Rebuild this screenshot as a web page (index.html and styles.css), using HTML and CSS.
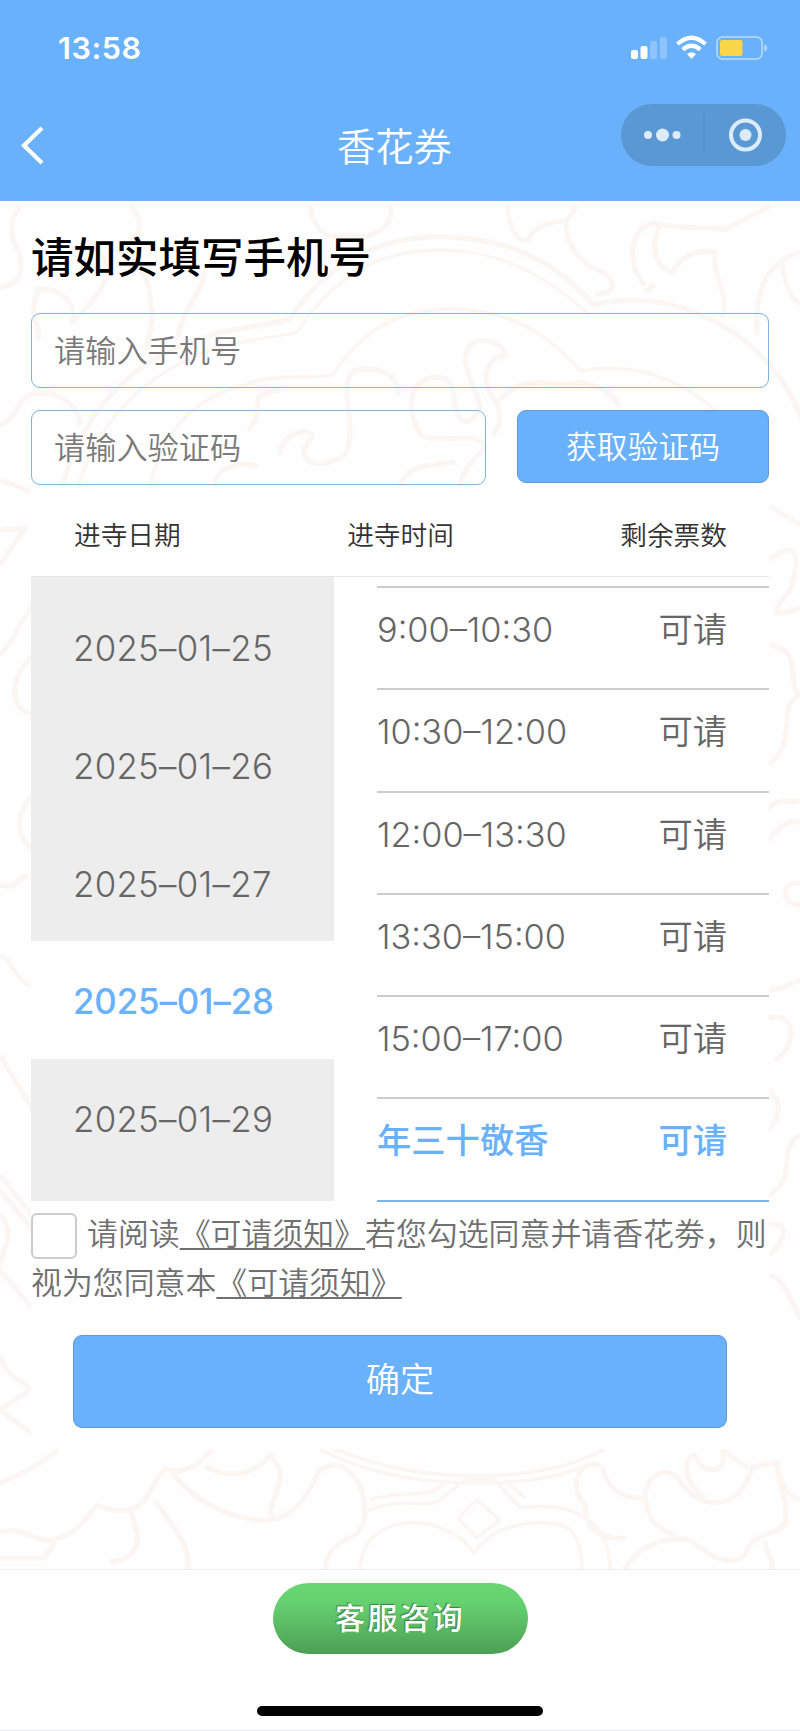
FILE: index.html
```html
<!DOCTYPE html>
<html lang="zh-CN">
<head>
    <meta charset="UTF-8">
    <meta name="viewport" content="width=device-width, initial-scale=1.0">
    <title>香花券</title>
    <link rel="stylesheet" href="styles.css">
</head>
<body>
    <header>
        <div class="status-bar">
            <span class="clock">13:58</span>
            <svg class="status-icons" width="138" height="26" viewBox="0 0 138 26">
                <g fill="#fff">
                    <rect x="1" y="15" width="7" height="9" rx="2"/>
                    <rect x="10.5" y="11" width="7" height="13" rx="2"/>
                    <rect x="20" y="6" width="7" height="18" rx="2" opacity=".25"/>
                    <rect x="30" y="2" width="7" height="22" rx="2" opacity=".25"/>
                </g>
                <g fill="none" stroke="#fff" stroke-width="4.2">
                    <path d="M47.5 9 Q61.500 -3.500 75.500 9"/>
                    <path d="M52.700 14.600 Q61.500 7 70.300 14.600"/>
                </g>
                <path d="M57 19 Q61.500 15.300 66 19 L61.500 24 Z" fill="#fff"/>
                <rect x="87" y="2" width="45" height="22" rx="5.500" fill="none" stroke="#a9d3fb" stroke-width="2"/>
                <rect x="90" y="5" width="22.500" height="16" rx="2" fill="#f9d549"/>
                <path d="M134 9.500 Q137.500 10 137.500 13 Q137.500 16 134 16.500 Z" fill="#a9d3fb"/>
            </svg>
        </div>
        <div class="nav-bar">
            <svg class="back" width="24" height="40" viewBox="0 0 24 40">
                <path d="M22 3 L4 20.500 L22 38" fill="none" stroke="#fff" stroke-width="4.200"/>
            </svg>
            <h1>香花券</h1>
            <div class="capsule">
                <svg width="165" height="62" viewBox="0 0 165 62">
                    <g fill="#dcecfb">
                        <circle cx="27" cy="31" r="4"/>
                        <circle cx="41.500" cy="31" r="6.500"/>
                        <circle cx="55.500" cy="31" r="4"/>
                        <circle cx="124.500" cy="31" r="6"/>
                    </g>
                    <path d="M83 10 V52" stroke="#5090cc" stroke-width="1"/>
                    <circle cx="124.500" cy="31" r="14.500" fill="none" stroke="#dcecfb" stroke-width="4"/>
                </svg>
            </div>
        </div>
    </header>

    <main>
        <!-- cloud pattern -->
        <svg class="pattern" width="800" height="1368" viewBox="0 201 800 1368">
            <g fill="none" stroke="#fbf6f2" stroke-width="5" stroke-linejoin="round">
                <!-- medallion, top half -->
                <path d="M62 487 C80 420 125 360 205 337 C235 327 265 327 290 319 C325 265 375 237 440 237 C510 237 555 262 594 305 C665 288 730 320 770 365 C785 382 795 400 804 425"/>
                <path d="M78 487 C95 430 135 378 208 351 C240 339 270 339 297 332 C335 275 380 250 440 250 C500 250 545 275 590 315" stroke-width="3"/>
                <path d="M150 487 C160 440 185 400 245 385 C275 372 305 380 333 375 C365 325 405 309 450 309 C510 309 550 335 580 371 C640 360 690 385 720 415" stroke-width="3.500"/>
                <!-- clouds above it -->
                <path d="M0 287 C20 285 25 270 18 250 C10 235 8 222 20 206 M35 290 C55 285 78 300 72 322 C95 300 120 275 98 250 C85 235 70 250 62 265 M130 206 C150 225 135 245 115 250 C130 262 150 270 150 300 C155 320 150 332 146 350 M205 270 C200 300 180 310 178 340 M40 290 C25 310 42 325 38 340"/>
                <path d="M310 206 C315 232 325 240 350 235 C375 240 395 225 390 206 M508 206 C508 232 520 242 528 240 C535 225 555 220 566 222 C566 245 580 265 605 273 C622 290 605 294 595 294 M566 222 L577 206"/>
                <path d="M645 285 C625 265 630 225 655 223 C690 232 715 225 725 230 C750 215 765 210 770 206 M660 225 C650 245 655 268 672 272 C685 250 705 250 715 252 C712 280 730 290 722 318 M757 335 C755 300 760 265 800 252 M782 262 C785 290 792 300 800 304 M655 285 L645 292"/>
                <!-- swirls behind the inputs -->
                <path d="M420 435 C405 405 410 380 435 377 C460 377 450 400 458 415 C462 425 475 425 480 405 C470 375 455 355 475 342 C490 338 503 345 506 355 C490 358 482 370 488 390 C500 405 505 420 493 435 M420 435 C440 445 475 430 485 445 C480 460 465 460 460 487 M500 400 C520 375 545 385 570 384 C590 380 610 390 620 407 M248 430 C270 410 240 395 280 390 M280 455 C280 430 320 425 310 440 C290 465 325 470 345 455 C360 425 335 385 355 370 C380 365 400 375 398 395 M400 487 C405 465 430 465 455 462 M215 487 C215 465 245 460 258 467"/>
                <path d="M0 425 C20 420 15 390 45 393 C65 395 80 410 80 425 M0 480 L32 492"/>
                <!-- side edges -->
                <path d="M0 530 L25 528 L0 565 M0 655 C15 640 20 620 34 605 M34 713 C12 715 5 680 34 655 M34 850 C15 840 15 810 34 795 M0 885 C12 890 18 880 28 875 M0 955 C15 960 15 985 34 985 M0 1055 L34 1112 M0 1175 L34 1218 M0 1190 L34 1232 M0 1215 C20 1235 -5 1260 0 1270 L34 1310 M0 1355 C10 1385 20 1375 30 1390 L0 1410 L34 1435"/>
                <path d="M768 505 L800 525 M768 560 C800 535 800 560 790 590 C775 610 765 620 800 608 M770 645 C805 650 785 685 800 695 C775 705 800 740 768 765 M768 808 C785 795 790 805 800 800 M768 840 C780 825 790 820 800 822 M800 883 C780 880 780 905 800 905 M768 990 C785 990 785 985 800 980 M768 1018 C800 1010 795 1050 775 1060 M768 1090 C790 1105 770 1130 768 1130 M768 1195 C800 1180 775 1150 800 1135 M768 1225 C795 1220 780 1245 770 1255 M768 1275 C785 1275 800 1320 800 1320"/>
                <!-- bottom band -->
                <path d="M0 1483 C20 1475 40 1465 58 1449 M0 1532 C20 1525 30 1540 52 1540 C75 1535 85 1520 97 1505 C120 1515 130 1510 140 1505 C150 1495 155 1480 165 1469 C185 1475 200 1465 212 1449 M130 1509 C140 1535 145 1558 110 1562 M155 1500 C170 1525 190 1540 188 1569 M172 1472 C195 1505 245 1525 275 1519 C305 1510 310 1485 320 1470 C345 1455 365 1480 365 1515 C360 1550 330 1530 325 1569 M205 1466 C230 1480 255 1475 270 1455 C295 1480 265 1500 272 1518 M0 1558 L45 1558 L55 1542"/>
                <path d="M335 1449 C420 1485 540 1485 605 1449 M320 1449 C400 1495 550 1490 590 1462 M365 1512 C400 1495 425 1510 440 1500 L465 1480 L495 1480 L520 1508 C580 1500 610 1525 610 1569 M370 1500 C395 1490 420 1498 435 1490 L450 1480 M505 1480 L525 1498 M360 1569 C365 1505 450 1515 474 1553 C500 1515 560 1520 570 1530 C580 1540 582 1555 582 1569 M477 1500 L500 1520 L477 1538 L458 1518 Z" stroke-width="3.500"/>
                <path d="M600 1465 C575 1460 570 1490 585 1505 C585 1530 600 1540 625 1538 M602 1465 C605 1485 620 1500 645 1498 C645 1475 665 1465 678 1478 C695 1510 740 1515 752 1467 L778 1462 C775 1485 790 1495 785 1525 C765 1540 755 1530 745 1555 C725 1570 705 1550 690 1540 C660 1535 635 1550 625 1569 M645 1498 C650 1525 660 1530 675 1535 M705 1498 C680 1480 685 1455 695 1455 C705 1480 730 1470 722 1449 L748 1468 M765 1540 C765 1555 775 1560 772 1569 M778 1470 C785 1495 790 1495 800 1500"/>
            </g>
        </svg>

        <form>
            <h2>请如实填写手机号</h2>
            <input type="text" placeholder="请输入手机号">
            <div class="code-row">
                <input type="text" placeholder="请输入验证码">
                <button type="button" class="code-button">获取验证码</button>
            </div>
            <section>
                <div class="table-head">
                    <span>进寺日期</span>
                    <span>进寺时间</span>
                    <span>剩余票数</span>
                </div>
                <div class="table-body">
                    <ul class="dates">
                        <li>2025–01–25</li>
                        <li>2025–01–26</li>
                        <li>2025–01–27</li>
                        <li class="selected">2025–01–28</li>
                        <li>2025–01–29</li>
                    </ul>
                    <ul class="times">
                        <li><span>9:00–10:30</span><b>可请</b></li>
                        <li><span>10:30–12:00</span><b>可请</b></li>
                        <li><span>12:00–13:30</span><b>可请</b></li>
                        <li><span>13:30–15:00</span><b>可请</b></li>
                        <li><span>15:00–17:00</span><b>可请</b></li>
                        <li class="selected"><span>年三十敬香</span><b>可请</b></li>
                    </ul>
                </div>
                <p class="agree"><input type="checkbox">请阅读<u>《可请须知》</u>若您勾选同意并请香花劵，则<br>视为您同意本<u>《可请须知》</u></p>
                <button type="button" class="ok-button">确定</button>
            </section>
        </form>
    </main>

    <footer>
        <button type="button" class="service-button">客服咨询</button>
        <div class="home-bar"></div>
    </footer>
</body>
</html>
```
FILE: styles.css
```css
* {
    box-sizing: border-box;
}
body {
    margin: 0;
    width: 800px;
    height: 1731px;
    overflow: hidden;
    background-color: #fefefe;
    color: #666;
    font-family: Inter, "Noto Sans CJK SC", sans-serif;
}
h1, h2, p, ul {
    margin: 0;
    padding: 0;
}
li {
    list-style: none;
}
button, input {
    font-family: inherit;
    margin: 0;
}
header {
    height: 201px;
    background-color: #69b1fa;
    color: #fff;
}
.status-bar {
    display: flex;
    justify-content: space-between;
    align-items: center;
    height: 96px;
    padding: 0 32px 0 58px;
}
.clock {
    font-size: 30.5px;
    font-weight: 600;
    line-height: 36px;
    letter-spacing: 0.6px;
}
.nav-bar {
    display: flex;
    align-items: flex-start;
    padding-top: 8px;
}
.back {
    margin: 21px 0 0 20px;
}
h1 {
    width: 116px;
    margin-left: 293px;
    padding-top: 16px;
    font-size: 38.3px;
    line-height: 54px;
    font-weight: 350;
    white-space: nowrap;
}
.capsule {
    margin-left: 168px;
    width: 165px;
    height: 62px;
    border-radius: 31px;
    background-color: #5a98d4;
}
main {
    position: relative;
    height: 1368px;
    overflow: hidden;
}
.pattern {
    position: absolute;
    top: 0;
    left: 0;
}
form {
    position: relative;
    padding: 0 31px;
}
h2 {
    height: 112px;
    padding-top: 27px;
    color: #000;
    font-size: 42.5px;
    line-height: 60px;
    font-weight: 500;
}
input[type="text"] {
    display: block;
    width: 738px;
    height: 75px;
    padding: 0 22px;
    border: 1px solid #7db5e2;
    border-radius: 9px;
    background: transparent;
    font-size: 31.2px;
    font-weight: 350;
    outline: none;
}
input::placeholder {
    color: #7a7a7a;
}
.code-row {
    display: flex;
    justify-content: space-between;
    margin-top: 22px;
}
.code-row input[type="text"] {
    width: 455px;
}
.code-button, .ok-button {
    border: 1px solid #5d9bdc;
    border-radius: 9px;
    background-color: #69b1fa;
    color: #fff;
    padding: 0 0 5px;
    font-weight: 350;
}
.code-button {
    width: 252px;
    height: 73px;
    font-size: 30.8px;
}
section {
    height: 962px;
    margin-top: 2px;
    background-color: #fefefe;
}
.table-head {
    display: flex;
    justify-content: space-between;
    height: 90px;
    padding: 28px 42px 0 43px;
    border-bottom: 1px solid #e6e6e6;
    color: #333;
    font-size: 26.7px;
    line-height: 40px;
    font-weight: 350;
}
.table-body {
    display: flex;
    justify-content: space-between;
    height: 624px;
}
.dates {
    width: 303px;
    padding-top: 11px;
    background-color: #ededed;
}
.dates li {
    height: 117.8px;
    padding-left: 42px;
    font-size: 34.8px;
    line-height: 120px;
    letter-spacing: 0.3px;
    font-weight: 350;
}
.dates .selected {
    background-color: #fefefe;
    color: #69b1fa;
    font-weight: 500;
    letter-spacing: -0.1px;
}
.times {
    width: 392px;
    margin-top: 9px;
    border-top: 2px solid #ccc;
}
.times li {
    display: flex;
    justify-content: space-between;
    height: 102.3px;
    padding: 17px 42px 0 0;
    border-bottom: 2px solid #ccc;
    font-size: 34.3px;
    line-height: 50px;
    font-weight: 350;
}
.times b {
    font-weight: 350;
}
.times .selected {
    border-color: #7db5e9;
    color: #69b1fa;
}
.times .selected span, .times .selected b {
    font-weight: 500;
}
.agree {
    height: 134px;
    padding-top: 9px;
    font-size: 30.9px;
    line-height: 48.3px;
    font-weight: 350;
    white-space: nowrap;
    color: #707070;
}
.agree u {
    text-underline-offset: 3px;
    text-decoration-thickness: 2px;
}
.agree input {
    appearance: none;
    width: 46px;
    height: 46px;
    margin-right: 10px;
    border: 2px solid #ccc;
    border-radius: 6px;
    background-color: #fff;
    vertical-align: -14px;
}
.ok-button {
    display: block;
    width: 654px;
    height: 93px;
    margin-left: 42px;
    padding-bottom: 9px;
    font-size: 34.2px;
}
footer {
    display: flex;
    flex-direction: column;
    align-items: center;
    height: 162px;
    padding-top: 13px;
    border-top: 1px solid #ececf0;
    border-bottom: 1px solid #e6eaf2;
    background-color: #fefefe;
}
.service-button {
    width: 255px;
    height: 71px;
    padding: 0 0 5px;
    border: none;
    border-radius: 36px;
    background: linear-gradient(#68d672, #65d06f 30%, #4b9f54);
    color: #fff;
    font-size: 30px;
    font-weight: 500;
    letter-spacing: 2.5px;
    text-shadow: -1px -1px 1px #3d7f45;
}
.home-bar {
    width: 286px;
    height: 10px;
    margin-top: 52px;
    border-radius: 5px;
    background-color: #000;
}
```
